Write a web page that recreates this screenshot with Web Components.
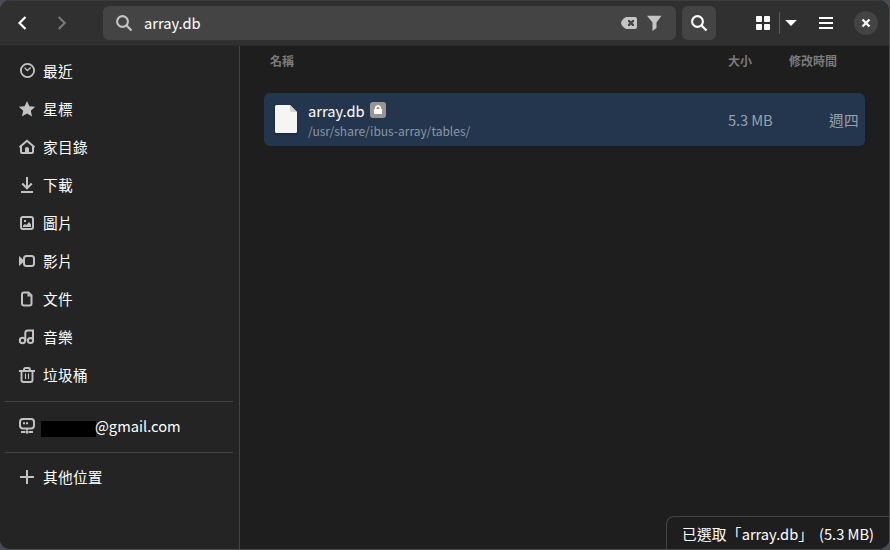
<!DOCTYPE html>
<html lang="zh-Hant">
<head>
<meta charset="utf-8">
<title>array.db</title>
<style>
html,body{margin:0;height:100%;background:#4b4a57;overflow:hidden}
body{font-family:"Noto Sans CJK TC","Noto Sans",sans-serif;font-size:14.67px;color:#fff}
</style>
</head>
<body>
<files-window></files-window>
<script>
const G = {
 back:'<path d="M11.500 2 5.500 8l6 6" fill="none" stroke="currentColor" stroke-width="2.2"/>',
 fwd:'<path d="M4.700 2l6 6-6 6" fill="none" stroke="currentColor" stroke-width="2.2"/>',
 search:'<circle cx="6.5" cy="6.5" r="5.4" fill="none" stroke="currentColor" stroke-width="2.1"/><path d="M10.3 10.3l5.2 5.2" stroke="currentColor" stroke-width="2.3"/>',
 clear:'<path fill-rule="evenodd" d="M5.5 2H14a2 2 0 0 1 2 2v8a2 2 0 0 1-2 2H5.500C3.500 14 0 9.800 0 8s3.500-6 5.500-6zM7 5v1.700L8.500 8 7 9.300V11h1.700L10 9.600l1.300 1.400H13V9.300L11.500 8 13 6.700V5h-1.700L10 6.400 8.700 5z"/>',
 filter:'<path d="M0 .7h14.500L9.500 7.500V13L5.500 16V7.500z"/>',
 grid:'<rect x="1" y="1" width="6" height="6" rx="1"/><rect x="9" y="1" width="6" height="6" rx="1"/><rect x="1" y="9" width="6" height="6" rx="1"/><rect x="9" y="9" width="6" height="6" rx="1"/>',
 down:'<path d="M2.200 5h11.600L8 11z"/>',
 menu:'<path d="M1 2h14v2H1zM1 7h14v2H1zM1 12h14v2H1z"/>',
 close:'<path d="M4.500 4.500l7 7M11.500 4.500l-7 7" stroke="currentColor" stroke-width="2.200"/>',
 recent:'<circle cx="8.500" cy="7.500" r="6.600" fill="none" stroke="currentColor" stroke-width="1.800"/><path d="M5.600 4.600l2.700 2.900 3.400-3.100" fill="none" stroke="currentColor" stroke-width="1.300"/>',
 star:'<path d="M8 0l2.400 5.300 5.800.5-4.400 3.900 1.300 5.800L8 12.500l-5.100 3 1.300-5.800L-.2 5.800l5.800-.5z"/>',
 home:'<path d="M.5 8.200L8 1.800l7.500 6.400M2 7.500V13q0 1 1 1h10q1 0 1-1V7.500" fill="none" stroke="currentColor" stroke-width="2"/><path d="M6 14V9.500q0-1.500 2-1.500t2 1.500V14z"/>',
 download:'<path d="M8 0v11M3.200 6.500L8 11.300l4.800-4.800M2 15h12" fill="none" stroke="currentColor" stroke-width="2"/>',
 picture:'<rect x="2" y="2" width="12" height="12" rx="2" fill="none" stroke="currentColor" stroke-width="2"/><rect x="5" y="5" width="2" height="2"/><path d="M4 12V10.500L6 9l1.500 1L10 7l2 2.500V12z"/>',
 video:'<rect x="5" y="3" width="10" height="10" rx="2.500" fill="none" stroke="currentColor" stroke-width="2"/><path d="M0 3l4.500 4v2L0 13z"/>',
 doc:'<path d="M5 2h4.500L12.500 5V13q0 2-2 2H5q-2 0-2-2V4q0-2 2-2z" transform="translate(0 -.5)" fill="none" stroke="currentColor" stroke-width="2"/><path d="M8.500 2v3.500H12z"/>',
 music:'<path d="M6.300 12V4q0-2.500 2.500-2.500h5.200V11" fill="none" stroke="currentColor" stroke-width="2"/><circle cx="3.500" cy="11.500" r="2.700" fill="none" stroke="currentColor" stroke-width="2"/><circle cx="11.500" cy="11.500" r="2.600" fill="none" stroke="currentColor" stroke-width="2"/>',
 trash:'<path d="M0 4h16M5 3.500V2.500Q5 1 6.500 1h3Q11 1 11 2.500v1M2.500 4v9q0 2 2 2h7q2 0 2-2V4" fill="none" stroke="currentColor" stroke-width="1.900"/><path d="M6.500 6.500V12M9.500 6.500V12" stroke="currentColor" stroke-width="1.100"/>',
 server:'<rect x="1" y="1" width="14" height="9.500" rx="3" fill="none" stroke="currentColor" stroke-width="2"/><path d="M4 4.300h2v2H4zM7 4.300h2v2H7zM7 10h2v2H7zM2 13h4v2H2zM10 13h4v2h-4z"/><circle cx="8" cy="14" r="1.700"/>',
 plus:'<path d="M8 1v14M1 8h14" stroke="currentColor" stroke-width="2"/>',
 lock:'<path d="M4 7h8v5H4z"/><path d="M5.700 7.500V6.200a2.300 2.300 0 0 1 4.600 0v1.300" fill="none" stroke="currentColor" stroke-width="1.500"/>'
};
function element(name, css, html){
  customElements.define(name, class extends HTMLElement{
    constructor(){
      super();
      const t = document.createElement('template');
      t.innerHTML = '<style>' + css + '</style>' + (typeof html === 'function' ? html(this) : html);
      this.attachShadow({mode:'open'}).append(t.content.cloneNode(true));
    }
  });
}
element('sym-icon',':host{display:block;flex:none;width:16px;height:16px}svg{display:block;overflow:visible}',
  e => `<svg width="16" height="16" viewBox="0 0 16 16" fill="currentColor">${G[e.getAttribute('name')]}</svg>`);
element('search-field',
 ':host{display:flex;align-items:center;box-sizing:border-box;width:573px;height:34px;border-radius:6px;background:#444;padding:0 13px}sym-icon{color:#c4c4c4}span{flex:1;margin-left:12px;line-height:22px}.f{margin-left:10px}',
 '<sym-icon name="search"></sym-icon><span><slot></slot></span><sym-icon name="clear"></sym-icon><sym-icon class="f" name="filter"></sym-icon>');
element('header-bar',
 `:host{display:flex;align-items:center;box-sizing:border-box;height:46px;background:#303030;border-top:1px solid #3c3c3c;border-bottom:1px solid #1b1b1b;padding:0 10px 0 14px}
 .fwd{margin-left:24px;color:#777}search-field{margin-left:33px}
 .b{width:34px;height:34px;border-radius:6px;background:#444;display:grid;place-items:center;margin-left:6px}
 .g{margin-left:39px}.s{width:1px;height:22px;background:#5a5a5a;margin-left:8px}.d{margin-left:3px}.m{margin-left:19px}
 .c{width:24px;height:24px;border-radius:50%;background:#444;display:grid;place-items:center;margin-left:20px}`,
 `<sym-icon name="back"></sym-icon><sym-icon class="fwd" name="fwd"></sym-icon><search-field>array.db</search-field>
 <div class="b"><sym-icon name="search"></sym-icon></div><sym-icon class="g" name="grid"></sym-icon><div class="s"></div><sym-icon class="d" name="down"></sym-icon><sym-icon class="m" name="menu"></sym-icon><div class="c"><sym-icon name="close"></sym-icon></div>`);
element('side-row',
 ':host{display:flex;align-items:center;height:38px;padding-left:19px;letter-spacing:.3px}:host([icon=server]){letter-spacing:0}sym-icon{color:#c2c2c2}span{margin-left:8px;line-height:22px;white-space:nowrap;display:flex;align-items:center}',
 e => `<sym-icon name="${e.getAttribute('icon')}"></sym-icon><span><slot></slot></span>`);
element('side-bar',
 ':host{display:block;box-sizing:border-box;width:240px;background:#242424;border-right:1px solid #444;padding-top:6px}hr{border:0;height:1px;background:#434343;margin:7px 6px 5px 5px}i{width:55px;height:16px;background:#000;margin:5px -1px 0 -2px}',
 `<side-row icon="recent">最近</side-row><side-row icon="star">星標</side-row><side-row icon="home">家目錄</side-row><side-row icon="download">下載</side-row><side-row icon="picture">圖片</side-row><side-row icon="video">影片</side-row><side-row icon="doc">文件</side-row><side-row icon="music">音樂</side-row><side-row icon="trash">垃圾桶</side-row><hr>
 <side-row icon="server"><i></i>@gmail.com</side-row><hr><side-row icon="plus">其他位置</side-row>`);
element('column-heads',
 ':host{display:grid;grid-template-columns:458px 61px auto;padding:6px 0 0 30px;height:47px;box-sizing:border-box;font-size:12px;font-weight:700;line-height:18px;color:#7b7b7b}',
 '<span>名稱</span><span>大小</span><span>修改時間</span>');
element('file-row',
 `:host{display:flex;align-items:center;box-sizing:border-box;width:601px;height:53px;margin-left:24px;border-radius:6px;background:#23364e;padding:0 6px 0 11px}
 svg{display:block;margin-bottom:1px;filter:drop-shadow(0 1px 1px #0005)}.n{width:420px;margin-left:11px;padding-top:1px}.t{display:flex;align-items:center;line-height:20px;gap:5px}
 .l{width:16px;height:16px;border-radius:3px;background:#99958f;margin-top:-1px}
 .p{font-size:12px;line-height:18px;color:#8d97a4;padding-top:1px}.z,.w{color:#98a1ac;line-height:22px}.z{letter-spacing:-.1px}.w{margin-left:auto;letter-spacing:.3px}`,
 `<svg width="22" height="28" viewBox="0 0 22 28"><path fill="#f6f5f4" d="M1.500 0H15l7 7v19.500q0 1.500-1.500 1.500h-19Q0 28 0 26.500v-25Q0 0 1.500 0z"/><path fill="#d5d3cf" d="M15 0l7 7h-5q-2 0-2-2z"/></svg>
 <div class="n"><div class="t"><slot name="name"></slot><div class="l"><sym-icon name="lock"></sym-icon></div></div><div class="p"><slot name="path"></slot></div></div><div class="z"><slot name="size"></slot></div><div class="w"><slot name="date"></slot></div>`);
element('status-pill',
 ':host{display:block;position:absolute;right:0;bottom:0;box-sizing:border-box;width:223px;height:33px;background:#1e1e1e;border:solid #444;border-width:1px 0 0 1px;border-radius:8px 0 0 0;padding:6px 0 0 15px;line-height:22px;white-space:pre;word-spacing:2.800px}','<slot></slot>');
element('file-pane',':host{display:block;flex:1;position:relative;background:#1e1e1e}',
 `<column-heads></column-heads><file-row><span slot="name">array.db</span><span slot="path">/usr/share/ibus-array/tables/</span><span slot="size">5.3 MB</span><span slot="date">週四</span></file-row><status-pill><span style="letter-spacing:.25px">已選取「</span>array.db」 <span style="word-spacing:0">(5.3 MB)</span></status-pill>`);
element('files-window',
 ':host{display:flex;flex-direction:column;width:889px;height:549px;border-radius:11px 11px 10px 10px;overflow:hidden;background:#1e1e1e}main{flex:1;display:flex;border-top:1px solid #2b2b2b;margin-top:-1px;z-index:0}',
 '<header-bar></header-bar><main><side-bar></side-bar><file-pane></file-pane></main>');
</script>
</body>
</html>
